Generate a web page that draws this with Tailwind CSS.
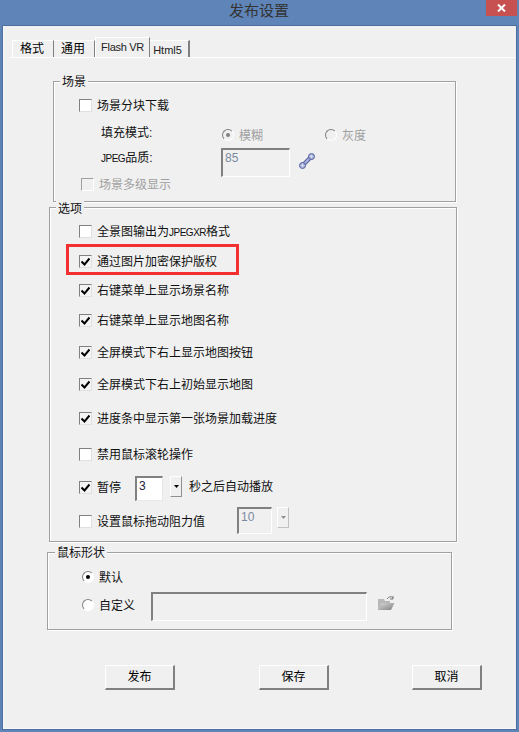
<!DOCTYPE html>
<html lang="zh-CN">
<head>
    <meta charset="UTF-8">
    <meta name="viewport" content="width=device-width, initial-scale=1.0">
    <title>发布设置</title>
    <script src="https://cdn.jsdelivr.net/npm/@tailwindcss/browser@4"></script>
</head>
<body class="bg-[#5f84b8] font-['Liberation_Sans','Noto_Sans_CJK_SC',sans-serif] text-xs leading-5 text-[#111]">
<div class="w-[519px] h-[732px] overflow-hidden">
    <!-- title bar -->
    <div class="relative h-[26px] flex justify-center pt-px">
        <span class="text-[15px] leading-5 text-[#333] pr-px">发布设置</span>
        <div class="absolute top-0 left-[486px] w-[31px] h-4 bg-[#c75050] flex items-center justify-center">
            <svg width="9" height="8" viewBox="0 0 9 8"><path d="M1 0.5 L8 7.5 M8 0.5 L1 7.5" stroke="#fff" stroke-width="2"/></svg>
        </div>
    </div>

    <!-- window body -->
    <div class="ml-[3px] w-[513px] h-[703px] bg-[#f0f0f0] shadow-[0_0_0_1px_#4c6f9f,inset_1px_0_0_#f8f8f8,inset_0_-1px_0_#f8f8f8]">
        <!-- tabs -->
        <div class="h-[31px] pl-[9px] flex items-end">
            <div class="w-[42px] h-[17px] bg-[#f0f0f0] border-t border-l border-white border-r border-r-[#808080] shadow-[1px_0_0_#a0a0a0] leading-[17px] pr-[2px] text-center text-black">格式</div>
            <div class="w-[41px] h-[17px] bg-[#f0f0f0] border-t border-white border-r border-r-[#808080] shadow-[1px_0_0_#a0a0a0] leading-[17px] pr-[2px] text-center text-black">通用</div>
            <div class="w-[55px] h-[20px] bg-[#f0f0f0] border-t border-l border-white border-r border-r-[#808080] text-[11px] leading-[18px] tracking-[-0.3px] text-center text-[#222]">Flash VR</div>
            <div class="w-[40px] h-[17px] bg-[#f0f0f0] border-t border-white border-r-2 border-r-[#808080] text-[11px] leading-[18px] pr-[3px] text-center text-[#222]">Html5</div>
        </div>
        <div class="ml-[7px] mr-px h-px bg-white"></div>

        <!-- tab panel -->
        <div class="h-[671px] pt-[23px]">
            <!-- 场景 -->
            <div class="relative ml-[50px] w-[403px] h-[121px] border border-[#a0a0a0] shadow-[inset_1px_1px_0_#fff,1px_1px_0_#fff] pl-[25px] pt-[13px]">
                <span class="absolute -top-[10px] left-[6px] px-[2px] bg-[#f0f0f0]">场景</span>
                <div class="h-5 flex items-center">
                    <span class="w-[13px] h-[13px] bg-white border border-[#808080] border-r-[#e0e0e0] border-b-[#e0e0e0]"></span>
                    <span class="ml-[5px] pt-[2px]">场景分块下载</span>
                </div>
                <div class="mt-[7px] h-5 flex items-center pl-[22px]">
                    <span class="w-[121px] pt-[2px]">填充模式:</span>
                    <div class="mt-[6px] flex items-center">
                        <span class="w-3 h-3 rounded-full bg-[#f0f0f0] border border-[#808080] border-r-white border-b-white flex items-center justify-center"><span class="w-1 h-1 rounded-full bg-[#808080]"></span></span>
                        <span class="ml-[5px] pt-[2px] w-[86px] text-[#a0a0a0]">模糊</span>
                        <span class="w-3 h-3 rounded-full bg-[#f0f0f0] border border-[#808080] border-r-white border-b-white"></span>
                        <span class="ml-[5px] pt-[2px] text-[#a0a0a0]">灰度</span>
                    </div>
                </div>
                <div class="mt-[5px] h-5 flex pl-[22px]">
                    <span class="w-[120px] pt-px"><span class="text-[10px] tracking-[-0.5px]">JPEG</span>品质:</span>
                    <div class="w-[69px] h-[29px] mt-px pl-[2px] border-2 border-[#808080] border-r-white border-b-white border-r border-b text-[#7b8aa0] font-['Liberation_Sans',sans-serif] leading-[17px]">85</div>
                    <svg class="ml-[9px] mt-[6px]" width="16" height="16" viewBox="0 0 16 16">
                        <path d="M3 13 L13 3" stroke="#56609c" stroke-width="4"/>
                        <path d="M3 13 L13 3" stroke="#aab4e0" stroke-width="2"/>
                        <circle cx="3.5" cy="12.5" r="3" fill="#aab4e0" stroke="#56609c"/>
                        <circle cx="12.5" cy="3.5" r="3" fill="#aab4e0" stroke="#56609c"/>
                        <circle cx="3.5" cy="12.5" r="1" fill="#f0f0f0"/>
                        <circle cx="12.5" cy="3.5" r="1" fill="#f0f0f0"/>
                    </svg>
                </div>
                <div class="mt-[7px] h-5 flex items-center pl-[2px]">
                    <span class="w-[13px] h-[13px] bg-[#f0f0f0] border border-[#a0a0a0] border-r-white border-b-white"></span>
                    <span class="ml-[5px] pt-[2px] text-[#a0a0a0]">场景多级显示</span>
                </div>
            </div>

            <!-- 选项 -->
            <div class="relative mt-[5px] ml-[46px] w-[408px] h-[335px] border border-[#a0a0a0] shadow-[inset_1px_1px_0_#fff,1px_1px_0_#fff] pl-[29px] pt-[13px]">
                <span class="absolute -top-[9px] left-[6px] px-[2px] bg-[#f0f0f0]">选项</span>
                <div class="h-5 flex items-center">
                    <span class="w-[13px] h-[13px] bg-white border border-[#808080] border-r-[#e0e0e0] border-b-[#e0e0e0]"></span>
                    <span class="ml-[5px] pt-[2px]">全景图输出为<span class="text-[10px] tracking-[-0.5px]">JPEGXR</span>格式</span>
                </div>
                <div class="relative mt-[10px] h-5 flex items-center">
                    <span class="w-[13px] h-[13px] bg-[#f4f4f4] border border-[#808080] border-r-[#e0e0e0] border-b-[#e0e0e0] flex items-center justify-center">
                        <svg width="9" height="9" viewBox="0 0 9 9"><path d="M0.5 4.5 L3.5 7.5 L8.5 1.5" fill="none" stroke="#000" stroke-width="2"/></svg>
                    </span>
                    <span class="ml-[5px] pt-[2px]">通过图片加密保护版权</span>
                    <div class="absolute -left-[13px] -top-[7px] w-[173px] h-[31px] border-[3px] border-[#f23030]"></div>
                </div>
                <div class="mt-[9px] h-5 flex items-center">
                    <span class="w-[13px] h-[13px] bg-[#f4f4f4] border border-[#808080] border-r-[#e0e0e0] border-b-[#e0e0e0] flex items-center justify-center">
                        <svg width="9" height="9" viewBox="0 0 9 9"><path d="M0.5 4.5 L3.5 7.5 L8.5 1.5" fill="none" stroke="#000" stroke-width="2"/></svg>
                    </span>
                    <span class="ml-[5px] pt-[2px]">右键菜单上显示场景名称</span>
                </div>
                <div class="mt-[10px] h-5 flex items-center">
                    <span class="w-[13px] h-[13px] bg-[#f4f4f4] border border-[#808080] border-r-[#e0e0e0] border-b-[#e0e0e0] flex items-center justify-center">
                        <svg width="9" height="9" viewBox="0 0 9 9"><path d="M0.5 4.5 L3.5 7.5 L8.5 1.5" fill="none" stroke="#000" stroke-width="2"/></svg>
                    </span>
                    <span class="ml-[5px] pt-[2px]">右键菜单上显示地图名称</span>
                </div>
                <div class="mt-[12px] h-5 flex items-center">
                    <span class="w-[13px] h-[13px] bg-[#f4f4f4] border border-[#808080] border-r-[#e0e0e0] border-b-[#e0e0e0] flex items-center justify-center">
                        <svg width="9" height="9" viewBox="0 0 9 9"><path d="M0.5 4.5 L3.5 7.5 L8.5 1.5" fill="none" stroke="#000" stroke-width="2"/></svg>
                    </span>
                    <span class="ml-[5px] pt-[2px]">全屏模式下右上显示地图按钮</span>
                </div>
                <div class="mt-[12px] h-5 flex items-center">
                    <span class="w-[13px] h-[13px] bg-[#f4f4f4] border border-[#808080] border-r-[#e0e0e0] border-b-[#e0e0e0] flex items-center justify-center">
                        <svg width="9" height="9" viewBox="0 0 9 9"><path d="M0.5 4.5 L3.5 7.5 L8.5 1.5" fill="none" stroke="#000" stroke-width="2"/></svg>
                    </span>
                    <span class="ml-[5px] pt-[2px]">全屏模式下右上初始显示地图</span>
                </div>
                <div class="mt-[14px] h-5 flex items-center">
                    <span class="w-[13px] h-[13px] bg-[#f4f4f4] border border-[#808080] border-r-[#e0e0e0] border-b-[#e0e0e0] flex items-center justify-center">
                        <svg width="9" height="9" viewBox="0 0 9 9"><path d="M0.5 4.5 L3.5 7.5 L8.5 1.5" fill="none" stroke="#000" stroke-width="2"/></svg>
                    </span>
                    <span class="ml-[5px] pt-[2px]">进度条中显示第一张场景加载进度</span>
                </div>
                <div class="mt-[16px] h-5 flex items-center">
                    <span class="w-[13px] h-[13px] bg-white border border-[#808080] border-r-[#e0e0e0] border-b-[#e0e0e0]"></span>
                    <span class="ml-[5px] pt-[2px]">禁用鼠标滚轮操作</span>
                </div>
                <div class="mt-[13px] h-5 flex items-center">
                    <span class="w-[13px] h-[13px] bg-[#f4f4f4] border border-[#808080] border-r-[#e0e0e0] border-b-[#e0e0e0] flex items-center justify-center">
                        <svg width="9" height="9" viewBox="0 0 9 9"><path d="M0.5 4.5 L3.5 7.5 L8.5 1.5" fill="none" stroke="#000" stroke-width="2"/></svg>
                    </span>
                    <span class="ml-[5px] pt-[2px] w-[38px]">暂停</span>
                    <div class="self-start -mt-px w-[28px] h-[25px] pl-[2px] bg-white border-l-2 border-t-2 border-r border-b border-[#808080] border-r-[#e8e8e8] border-b-[#e8e8e8] font-['Liberation_Sans',sans-serif] leading-[17px] text-[#224]">3</div>
                    <div class="self-start -mt-px ml-[7px] w-[12px] h-[21px] bg-[#f0f0f0] border-t border-l border-white border-r border-b border-r-[#909090] border-b-[#909090] flex items-center justify-center">
                        <svg width="5" height="3" viewBox="0 0 5 3"><path d="M0 0 H5 L2.5 3 Z" fill="#000"/></svg>
                    </div>
                    <span class="ml-[7px] -mt-[3px] pt-[2px]">秒之后自动播放</span>
                </div>
                <div class="mt-[14px] h-5 flex items-center">
                    <span class="w-[13px] h-[13px] bg-white border border-[#808080] border-r-[#e0e0e0] border-b-[#e0e0e0]"></span>
                    <span class="ml-[5px] pt-[2px] w-[140px]">设置鼠标拖动阻力值</span>
                    <div class="self-start -mt-[4px] w-[35px] h-[27px] pl-[2px] bg-[#f0f0f0] border-l-2 border-t-2 border-r border-b border-[#808080] border-r-white border-b-white font-['Liberation_Sans',sans-serif] leading-[17px] text-[#7b8aa0]">10</div>
                    <div class="self-start -mt-[4px] ml-[5px] w-[12px] h-[21px] bg-[#f0f0f0] border-t border-l border-white border-r border-b border-r-[#c0c0c0] border-b-[#c0c0c0] flex items-center justify-center">
                        <svg width="5" height="3" viewBox="0 0 5 3"><path d="M0 0 H5 L2.5 3 Z" fill="#909090"/></svg>
                    </div>
                </div>
            </div>

            <!-- 鼠标形状 -->
            <div class="relative mt-[10px] ml-[44px] w-[405px] h-[78px] border border-[#a0a0a0] shadow-[inset_1px_1px_0_#fff,1px_1px_0_#fff] pl-[34px] pt-[14px]">
                <span class="absolute -top-[10px] left-[7px] px-[2px] bg-[#f0f0f0]">鼠标形状</span>
                <div class="h-5 flex items-center">
                    <span class="w-3 h-3 rounded-full bg-white border border-[#808080] border-r-white border-b-white flex items-center justify-center"><span class="w-1 h-1 rounded-full bg-black"></span></span>
                    <span class="ml-[5px] pt-[2px]">默认</span>
                </div>
                <div class="mt-[8px] h-5 flex items-center">
                    <span class="w-3 h-3 rounded-full bg-white border border-[#808080] border-r-white border-b-white"></span>
                    <span class="ml-[5px] pt-[2px] w-[52px]">自定义</span>
                    <div class="self-start -mt-[3px] w-[216px] h-[29px] bg-[#f0f0f0] border-l-2 border-t-2 border-r border-b border-[#808080] border-r-white border-b-white"></div>
                    <svg class="ml-[10px] -mt-[4px]" width="18" height="16" viewBox="0 0 18 16">
                        <defs><linearGradient id="folderFill" x1="0" y1="0" x2="1" y2="1"><stop offset="0" stop-color="#d8d8d8"/><stop offset="1" stop-color="#808080"/></linearGradient></defs>
                        <path d="M1 4 H7 L8 6 H13 V8 H5 L2 15 H1 Z" fill="#b8b8b8"/>
                        <path d="M4.5 8 H17.5 L14 15 H1.5 Z" fill="url(#folderFill)"/>
                        <path d="M10 4 Q13 0 16 3 M16 1 V4 H13" fill="none" stroke="#777" stroke-width="1"/>
                    </svg>
                </div>
            </div>

            <!-- buttons -->
            <div class="mt-[35px] ml-[102px] flex">
                <div class="w-[70px] h-[25px] bg-[#f0f0f0] border-t border-l border-white border-r-2 border-b-2 border-r-[#808080] border-b-[#808080] text-center leading-[22px] text-black">发布</div>
                <div class="ml-[84px] w-[70px] h-[25px] bg-[#f0f0f0] border-t border-l border-white border-r-2 border-b-2 border-r-[#808080] border-b-[#808080] text-center leading-[22px] text-black">保存</div>
                <div class="ml-[83px] w-[70px] h-[25px] bg-[#f0f0f0] border-t border-l border-white border-r-2 border-b-2 border-r-[#808080] border-b-[#808080] text-center leading-[22px] text-black">取消</div>
            </div>
        </div>
    </div>
</div>
</body>
</html>
